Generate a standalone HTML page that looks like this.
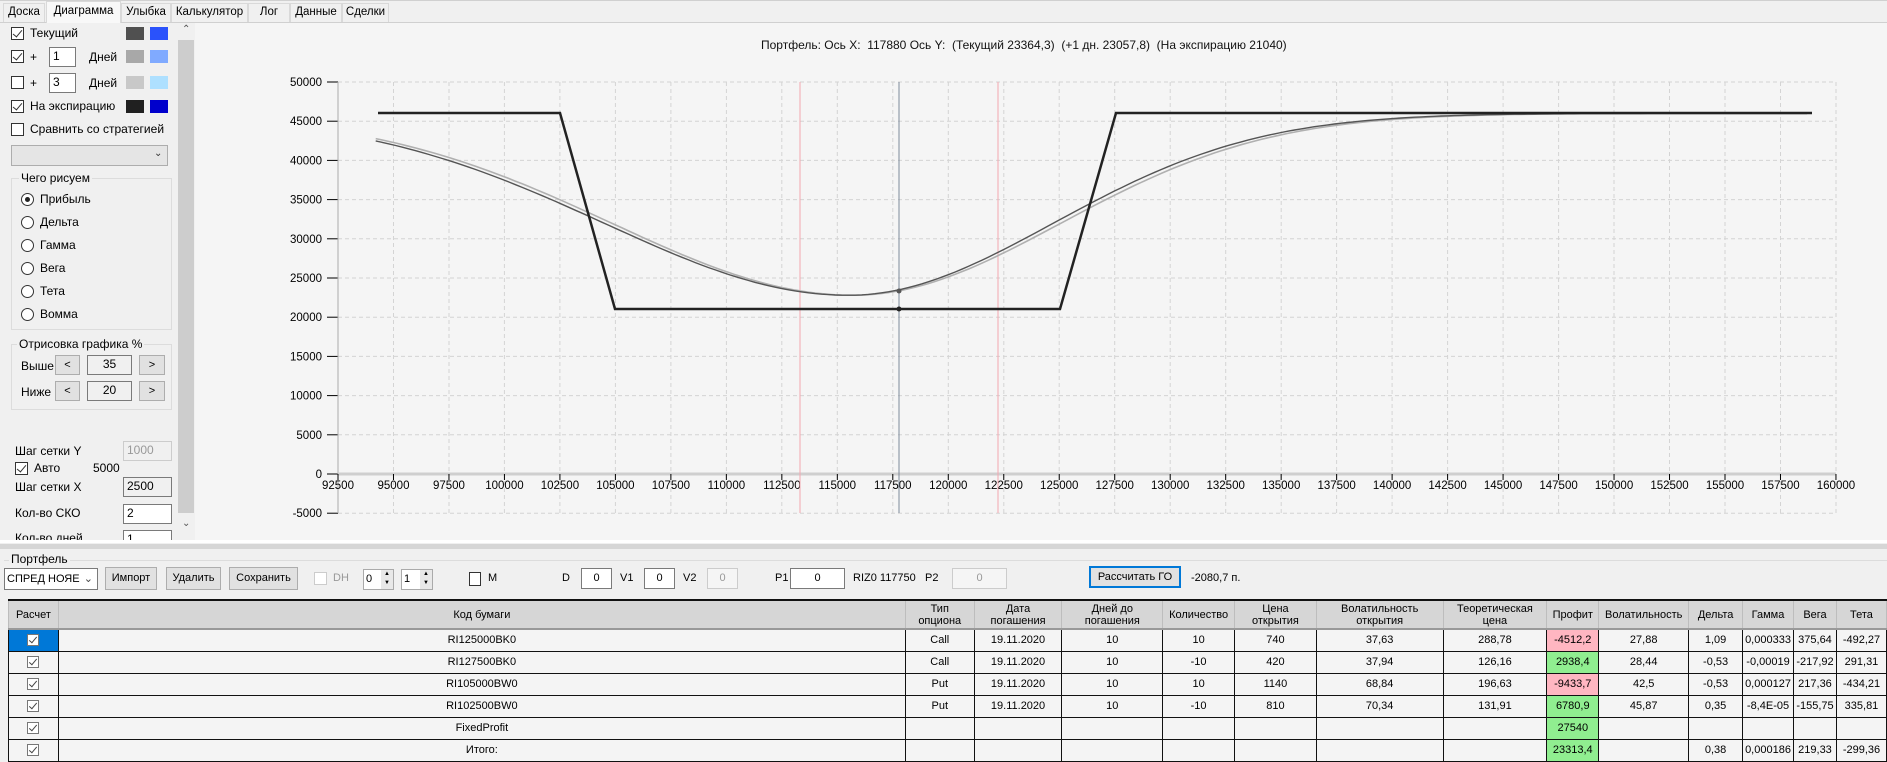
<!DOCTYPE html>
<html><head><meta charset="utf-8">
<style>
*{box-sizing:border-box;margin:0;padding:0}
body{width:1887px;height:761px;overflow:hidden;background:#f0f0f0;font-family:"Liberation Sans",sans-serif;font-size:12px;color:#000;position:relative}
.a{position:absolute;white-space:nowrap}
.cb{position:absolute;width:13px;height:13px;border:1px solid #333;background:#fff}
.cb.on::after{content:"";position:absolute;left:3px;top:0px;width:4px;height:8px;border:solid #333;border-width:0 1.3px 1.3px 0;transform:rotate(40deg)}
.rb{position:absolute;width:13px;height:13px;border:1px solid #333;border-radius:50%;background:#fff}
.rb.on::after{content:"";position:absolute;left:3px;top:3px;width:5px;height:5px;border-radius:50%;background:#222}
.sw{position:absolute;width:18px;height:13px}
.tb{position:absolute;border:1px solid #7a7a7a;background:#fff;padding-left:3px;line-height:17px}
.btn{position:absolute;border:1px solid #adadad;background:#e1e1e1;text-align:center;font-size:11px}
.grp{position:absolute;border:1px solid #dcdcdc}
.tab{position:absolute;top:3px;height:19px;border:1px solid #d9d9d9;border-bottom:none;background:#f0f0f0;font-size:11.5px;text-align:center;line-height:17px}
table{position:absolute;left:8px;top:599px;border-collapse:collapse;font-size:11px;table-layout:fixed}
td,th{border:1px solid #111;text-align:center;height:22px;background:#f4f4f4;font-weight:normal;overflow:hidden;white-space:nowrap}
th{background:#d6d6d6;border-color:#bdbdbd;border-bottom:2px solid #999;border-top:2px solid #111;height:29px;line-height:12px;font-size:11px}
td.r{background:#ffb6c1}td.g{background:#90ee90}
.ck{display:inline-block;width:12px;height:12px;border:1px solid #777;background:#fff;position:relative;vertical-align:middle}
.ck::after{content:"";position:absolute;left:3px;top:0;width:3px;height:7px;border:solid #444;border-width:0 1px 1px 0;transform:rotate(40deg)}
</style></head><body>
<div class="a" style="left:0;top:0;width:1887px;height:1px;background:#d0d0d0"></div>
<div class="a" style="left:0;top:22px;width:1887px;height:1px;background:#d0d0d0"></div>
<div class="tab" style="left:3px;width:42px">Доска</div>
<div class="tab" style="left:46px;width:75px;top:1px;height:22px;background:#f8f8f8;line-height:18px">Диаграмма</div>
<div class="tab" style="left:121px;width:50px">Улыбка</div>
<div class="tab" style="left:171px;width:77px">Калькулятор</div>
<div class="tab" style="left:248px;width:42px">Лог</div>
<div class="tab" style="left:290px;width:52px">Данные</div>
<div class="tab" style="left:342px;width:47px">Сделки</div>
<div class="a" style="left:195px;top:23px;width:1692px;height:517px;background:#f5f5f5"></div>
<div class="cb on" style="left:11px;top:27px"></div><div class="a" style="left:30px;top:26px">Текущий</div>
<div class="sw" style="left:126px;top:27px;background:#505050"></div><div class="sw" style="left:150px;top:27px;background:#2a52fb"></div>
<div class="cb on" style="left:11px;top:50px"></div><div class="a" style="left:30px;top:50px">+</div>
<div class="tb" style="left:49px;top:47px;width:27px;height:20px">1</div><div class="a" style="left:89px;top:50px">Дней</div>
<div class="sw" style="left:126px;top:50px;background:#a8a8a8"></div><div class="sw" style="left:150px;top:50px;background:#80aaff"></div>
<div class="cb" style="left:11px;top:76px"></div><div class="a" style="left:30px;top:76px">+</div>
<div class="tb" style="left:49px;top:73px;width:27px;height:20px">3</div><div class="a" style="left:89px;top:76px">Дней</div>
<div class="sw" style="left:126px;top:76px;background:#c8c8c8"></div><div class="sw" style="left:150px;top:76px;background:#aee0ff"></div>
<div class="cb on" style="left:11px;top:100px"></div><div class="a" style="left:30px;top:99px">На экспирацию</div>
<div class="sw" style="left:126px;top:100px;background:#202020"></div><div class="sw" style="left:150px;top:100px;background:#0000cc"></div>
<div class="cb" style="left:11px;top:123px"></div><div class="a" style="left:30px;top:122px">Сравнить со стратегией</div>
<div class="a" style="left:11px;top:145px;width:157px;height:21px;border:1px solid #adadad;background:#e5e5e5"></div>
<div class="a" style="left:154px;top:148px;font-size:10px;color:#333">&#8964;</div>
<div class="grp" style="left:11px;top:178px;width:161px;height:152px"></div>
<div class="a" style="left:19px;top:171px;background:#f0f0f0;padding:0 2px">Чего рисуем</div>
<div class="rb on" style="left:21px;top:193px"></div><div class="a" style="left:40px;top:192px">Прибыль</div>
<div class="rb" style="left:21px;top:216px"></div><div class="a" style="left:40px;top:215px">Дельта</div>
<div class="rb" style="left:21px;top:239px"></div><div class="a" style="left:40px;top:238px">Гамма</div>
<div class="rb" style="left:21px;top:262px"></div><div class="a" style="left:40px;top:261px">Вега</div>
<div class="rb" style="left:21px;top:285px"></div><div class="a" style="left:40px;top:284px">Тета</div>
<div class="rb" style="left:21px;top:308px"></div><div class="a" style="left:40px;top:307px">Вомма</div>
<div class="grp" style="left:11px;top:344px;width:161px;height:66px"></div>
<div class="a" style="left:17px;top:337px;background:#f0f0f0;padding:0 2px">Отрисовка графика %</div>
<div class="a" style="left:21px;top:359px">Выше</div>
<div class="btn" style="left:55px;top:355px;width:25px;height:20px;line-height:18px">&lt;</div>
<div class="tb" style="left:87px;top:355px;width:45px;height:20px;text-align:center;padding:0;background:#f0f0f0">35</div>
<div class="btn" style="left:139px;top:355px;width:26px;height:20px;line-height:18px">&gt;</div>
<div class="a" style="left:21px;top:385px">Ниже</div>
<div class="btn" style="left:55px;top:381px;width:25px;height:20px;line-height:18px">&lt;</div>
<div class="tb" style="left:87px;top:381px;width:45px;height:20px;text-align:center;padding:0;background:#f0f0f0">20</div>
<div class="btn" style="left:139px;top:381px;width:26px;height:20px;line-height:18px">&gt;</div>
<div class="a" style="left:15px;top:444px">Шаг сетки Y</div>
<div class="tb" style="left:123px;top:441px;width:49px;height:20px;background:#f0f0f0;border-color:#ccc;color:#999">1000</div>
<div class="cb on" style="left:15px;top:462px"></div><div class="a" style="left:34px;top:461px">Авто</div><div class="a" style="left:93px;top:461px">5000</div>
<div class="a" style="left:15px;top:480px">Шаг сетки X</div>
<div class="tb" style="left:123px;top:477px;width:49px;height:20px;background:#f0f0f0">2500</div>
<div class="a" style="left:15px;top:506px">Кол-во СКО</div>
<div class="tb" style="left:123px;top:504px;width:49px;height:20px">2</div>
<div class="a" style="left:15px;top:531px;height:9px;overflow:hidden">Кол-во дней</div>
<div class="tb" style="left:123px;top:530px;width:49px;height:10px;border-bottom:none;line-height:17px;overflow:hidden">1</div>
<div class="a" style="left:178px;top:23px;width:16px;height:517px;background:#f0f0f0"></div>
<div class="a" style="left:178px;top:40px;width:16px;height:473px;background:#cdcdcd"></div>
<div class="a" style="left:182px;top:24px;font-size:10px;color:#555">&#8963;</div>
<div class="a" style="left:182px;top:518px;font-size:10px;color:#555">&#8964;</div>
<div class="a" style="left:761px;top:38px;font-size:12px;color:#111">Портфель: Ось X:&nbsp; 117880 Ось Y:&nbsp; (Текущий 23364,3)&nbsp; (+1 дн. 23057,8)&nbsp; (На экспирацию 21040)</div>
<svg class="a" id="ch" style="left:0;top:0" width="1887" height="540"></svg>
<div class="a" style="left:0;top:540px;width:1887px;height:3px;background:#fff"></div>
<div class="a" style="left:0;top:544px;width:1887px;height:5px;background:#d6d6d6"></div>
<div class="a" style="left:4px;top:560px;width:1883px;height:1px;background:#dcdcdc"></div>
<div class="a" style="left:9px;top:552px;background:#f0f0f0;padding:0 2px">Портфель</div>
<div class="a" style="left:4px;top:568px;width:94px;height:22px;border:1px solid #7a7a7a;background:#fff;font-size:11px;line-height:20px;padding-left:2px;overflow:hidden">СПРЕД НОЯЕ<span style="position:absolute;right:4px;color:#444">&#8964;</span></div>
<div class="btn" style="left:105px;top:567px;width:52px;height:23px;line-height:21px">Импорт</div>
<div class="btn" style="left:166px;top:567px;width:55px;height:23px;line-height:21px">Удалить</div>
<div class="btn" style="left:229px;top:567px;width:69px;height:23px;line-height:21px">Сохранить</div>
<div class="a" style="left:314px;top:572px;width:13px;height:13px;border:1px solid #ccc;background:#fff"></div>
<div class="a" style="left:333px;top:572px;color:#999;font-size:11px">DH</div>
<div class="a" style="left:363px;top:569px;width:31px;height:21px;border:1px solid #aaa;background:#fff;font-size:11px;padding-left:2px;line-height:19px">0<span style="position:absolute;right:0;top:0;width:12px;height:19px;background:#e8e8e8;font-size:6px;line-height:9px;text-align:center">▲<br>▼</span></div>
<div class="a" style="left:401px;top:569px;width:32px;height:21px;border:1px solid #aaa;background:#fff;font-size:11px;padding-left:2px;line-height:19px">1<span style="position:absolute;right:0;top:0;width:12px;height:19px;background:#e8e8e8;font-size:6px;line-height:9px;text-align:center">▲<br>▼</span></div>
<div class="a" style="left:469px;top:572px;width:12px;height:14px;border:1px solid #333;background:#fff"></div>
<div class="a" style="left:488px;top:572px;font-size:11px">M</div>
<div class="a" style="left:562px;top:572px;font-size:11px">D</div>
<div class="a" style="left:581px;top:568px;width:31px;height:21px;border:1px solid #7a7a7a;background:#fff;text-align:center;line-height:19px;font-size:11px">0</div>
<div class="a" style="left:620px;top:572px;font-size:11px">V1</div>
<div class="a" style="left:644px;top:568px;width:31px;height:21px;border:1px solid #7a7a7a;background:#fff;text-align:center;line-height:19px;font-size:11px">0</div>
<div class="a" style="left:683px;top:572px;font-size:11px">V2</div>
<div class="a" style="left:707px;top:568px;width:31px;height:21px;border:1px solid #ccc;background:#f5f5f5;color:#999;text-align:center;line-height:19px;font-size:11px">0</div>
<div class="a" style="left:775px;top:572px;font-size:11px">P1</div>
<div class="a" style="left:790px;top:568px;width:55px;height:21px;border:1px solid #7a7a7a;background:#fff;text-align:center;line-height:19px;font-size:11px">0</div>
<div class="a" style="left:853px;top:572px;font-size:11px">RIZ0 117750</div>
<div class="a" style="left:925px;top:572px;font-size:11px">P2</div>
<div class="a" style="left:952px;top:568px;width:55px;height:21px;border:1px solid #ccc;background:#f5f5f5;color:#999;text-align:center;line-height:19px;font-size:11px">0</div>
<div class="a" style="left:1089px;top:566px;width:92px;height:22px;border:2px solid #0078d7;background:#e1e1e1;text-align:center;line-height:18px;font-size:11px">Рассчитать ГО</div>
<div class="a" style="left:1191px;top:572px;font-size:11px">-2080,7 п.</div>
<table>
<colgroup><col style="width:50px"><col style="width:852px"><col style="width:69px"><col style="width:88px"><col style="width:101px"><col style="width:72px"><col style="width:82px"><col style="width:127px"><col style="width:104px"><col style="width:52px"><col style="width:90px"><col style="width:54px"><col style="width:51px"><col style="width:43px"><col style="width:50px"></colgroup>
<tr><th>Расчет</th><th>Код бумаги</th><th>Тип<br>опциона</th><th>Дата<br>погашения</th><th>Дней до<br>погашения</th><th>Количество</th><th>Цена<br>открытия</th><th>Волатильность<br>открытия</th><th>Теоретическая<br>цена</th><th>Профит</th><th>Волатильность</th><th>Дельта</th><th>Гамма</th><th>Вега</th><th>Тета</th></tr>
<tr><td style="background:#0078d7"><span class="ck"></span></td><td>RI125000BK0</td><td>Call</td><td>19.11.2020</td><td>10</td><td>10</td><td>740</td><td>37,63</td><td>288,78</td><td class="r">-4512,2</td><td>27,88</td><td>1,09</td><td>0,000333</td><td>375,64</td><td>-492,27</td></tr>
<tr><td><span class="ck"></span></td><td>RI127500BK0</td><td>Call</td><td>19.11.2020</td><td>10</td><td>-10</td><td>420</td><td>37,94</td><td>126,16</td><td class="g">2938,4</td><td>28,44</td><td>-0,53</td><td>-0,00019</td><td>-217,92</td><td>291,31</td></tr>
<tr><td><span class="ck"></span></td><td>RI105000BW0</td><td>Put</td><td>19.11.2020</td><td>10</td><td>10</td><td>1140</td><td>68,84</td><td>196,63</td><td class="r">-9433,7</td><td>42,5</td><td>-0,53</td><td>0,000127</td><td>217,36</td><td>-434,21</td></tr>
<tr><td><span class="ck"></span></td><td>RI102500BW0</td><td>Put</td><td>19.11.2020</td><td>10</td><td>-10</td><td>810</td><td>70,34</td><td>131,91</td><td class="g">6780,9</td><td>45,87</td><td>0,35</td><td>-8,4E-05</td><td>-155,75</td><td>335,81</td></tr>
<tr><td><span class="ck"></span></td><td>FixedProfit</td><td></td><td></td><td></td><td></td><td></td><td></td><td></td><td class="g">27540</td><td></td><td></td><td></td><td></td><td></td></tr>
<tr><td><span class="ck"></span></td><td>Итого:</td><td></td><td></td><td></td><td></td><td></td><td></td><td></td><td class="g">23313,4</td><td></td><td>0,38</td><td>0,000186</td><td>219,33</td><td>-299,36</td></tr>
</table>
<script>
(function(){
var s=document.getElementById('ch'),h='';
function X(v){return 338+(v-92500)/2500*55.48}
function Y(v){return 474-v/5000*39.2}
for(var v=95000;v<=160000;v+=2500){var x=X(v).toFixed(1);h+='<line x1="'+x+'" y1="82" x2="'+x+'" y2="513" stroke="#d4d4d4" stroke-dasharray="4,3"/>'}
for(var w=-5000;w<=50000;w+=5000){var y=Y(w).toFixed(1);if(w!=0)h+='<line x1="338" y1="'+y+'" x2="1836" y2="'+y+'" stroke="#d4d4d4" stroke-dasharray="4,3"/>';
h+='<line x1="327" y1="'+y+'" x2="338" y2="'+y+'" stroke="#000"/>';
h+='<text x="322" y="'+(Y(w)+4)+'" text-anchor="end" font-size="11.5" font-family="Liberation Sans">'+w+'</text>'}
h+='<line x1="338" y1="82" x2="338" y2="513" stroke="#aaa"/>';
h+='<line x1="338" y1="474" x2="1836" y2="474" stroke="#cfcfcf" stroke-width="3"/>';
for(var v=92500;v<=160000;v+=2500){h+='<line x1="'+X(v)+'" y1="474" x2="'+X(v)+'" y2="480" stroke="#000"/><text x="'+X(v)+'" y="489" text-anchor="middle" font-size="11.5" font-family="Liberation Sans">'+v+'</text>'}
h+='<line x1="800" y1="82" x2="800" y2="513" stroke="#f4a7b0"/><line x1="998" y1="82" x2="998" y2="513" stroke="#f4a7b0"/>';
h+='<line x1="899" y1="82" x2="899" y2="513" stroke="#7d8a9a"/>';
function cur(off,sl,sr){var p='';for(var v=94200;v<=158800;v+=300){var d=v-115500-off;var sc=d<0?sl:sr;var val=46000-23200*Math.exp(-Math.pow(d/sc,2));p+=(p?'L':'M')+X(v).toFixed(1)+','+Y(val).toFixed(1)}return p}
h+='<path d="'+cur(200,15300,13200)+'" fill="none" stroke="#b0b0b0" stroke-width="1.6"/>';
h+='<path d="'+cur(0,15500,13000)+'" fill="none" stroke="#555" stroke-width="1.4"/>';
h+='<path d="M378,113L560,113L615,309L1060,309L1116,113L1812,113" fill="none" stroke="#222" stroke-width="2.5"/>';
h+='<circle cx="899" cy="291" r="2.5" fill="#555"/><circle cx="899" cy="309" r="2.5" fill="#222"/>';
s.innerHTML=h;
})();
</script>
</body></html>
